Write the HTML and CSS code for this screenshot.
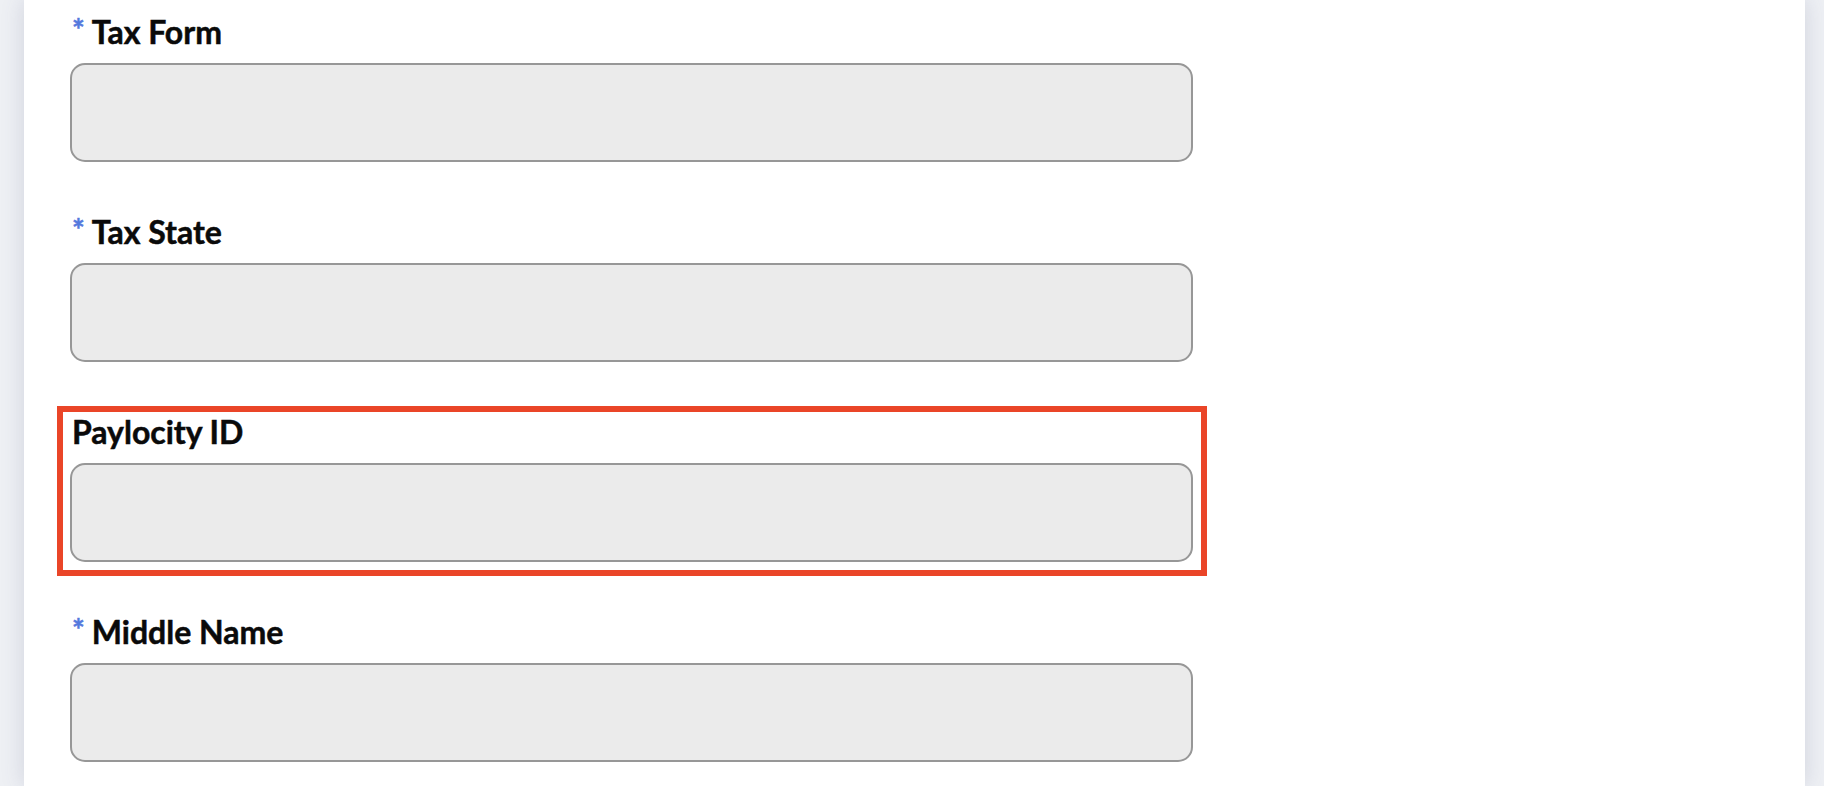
FILE: index.html
```html
<!DOCTYPE html>
<html lang="en">
<head>
<meta charset="utf-8">
<title>Form</title>
<link rel="stylesheet" href="styles.css">
</head>
<body>
  <main class="card">
    <div class="field">
      <label class="label"><span class="req">*</span>Tax Form</label>
      <div class="input"></div>
    </div>
    <div class="field">
      <label class="label"><span class="req">*</span>Tax State</label>
      <div class="input"></div>
    </div>
    <div class="field highlighted">
      <label class="label">Paylocity ID</label>
      <div class="input"></div>
    </div>
    <div class="field">
      <label class="label"><span class="req">*</span>Middle Name</label>
      <div class="input"></div>
    </div>
  </main>
</body>
</html>
```

FILE: styles.css
```css
html, body {
  margin: 0;
  padding: 0;
  height: 100%;
}

body {
  background: #eef0f4;
  font-family: Lato, "Open Sans", sans-serif;
  overflow: hidden;
}

.card {
  margin: 0 19px 0 24px;
  min-height: 100%;
  background: #ffffff;
  box-shadow: 0 0 22px rgba(70, 80, 120, 0.18);
  padding: 12px 0 0 46px;
  box-sizing: border-box;
  display: flex;
  flex-direction: column;
  gap: 50px;
}

.field {
  position: relative;
  width: 1123px;
  display: flex;
  flex-direction: column;
  gap: 11px;
}

.label {
  display: block;
  font-size: 32px;
  line-height: 40px;
  font-weight: 700;
  color: #0a0a0a;
  -webkit-text-stroke: 0.5px #0a0a0a;
  margin-left: 2px;
}

.req {
  display: inline-block;
  font-size: 30px;
  color: #5479dd;
  -webkit-text-stroke: 0.5px #5479dd;
  margin-right: 7px;
  vertical-align: top;
  line-height: 34px;
}

.input {
  height: 99px;
  box-sizing: border-box;
  border: 2px solid #979797;
  border-radius: 15px;
  background: #ebebeb;
}

.highlighted::after {
  content: "";
  position: absolute;
  top: -6px;
  left: -13px;
  right: -14px;
  bottom: -14px;
  border: 6px solid #ea4528;
  pointer-events: none;
}
```
